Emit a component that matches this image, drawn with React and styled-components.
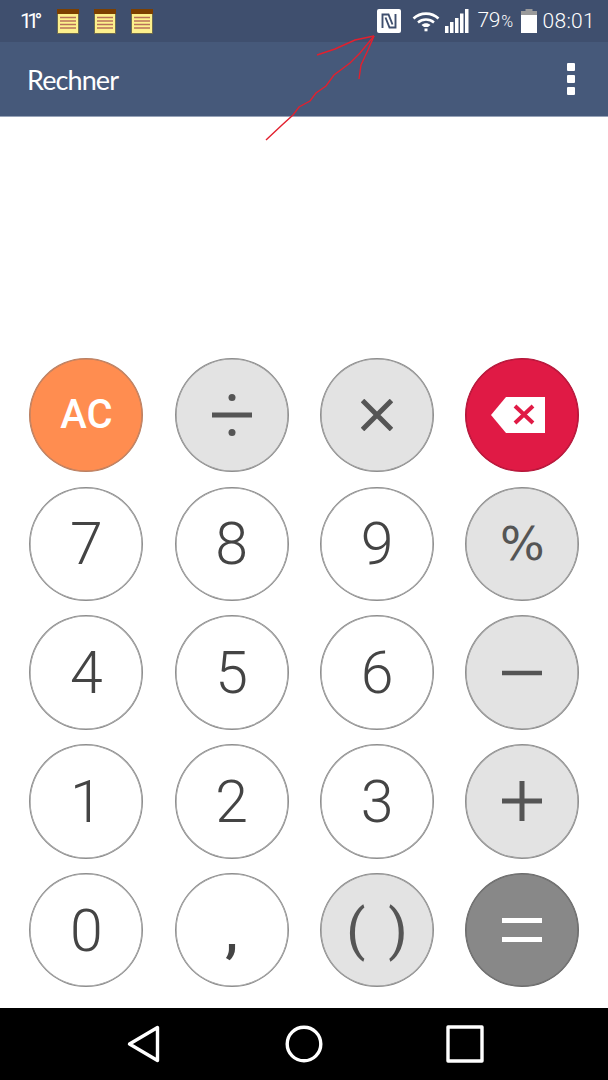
import styled, { createGlobalStyle } from "styled-components";

const GlobalStyle = createGlobalStyle`
  html, body { margin: 0; padding: 0; background: #fff; }
  * { box-sizing: border-box; }
`;

const Screen = styled.div`
  position: relative;
  width: 608px;
  height: 1080px;
  display: flex;
  flex-direction: column;
  overflow: hidden;
  font-family: Roboto, "Liberation Sans", sans-serif;
`;

const StatusBar = styled.div`
  height: 42px;
  background: #3f4f6e;
  display: flex;
  align-items: center;
  justify-content: space-between;
  color: #fff;
`;

const StatusLeft = styled.div`
  display: flex;
  align-items: center;
  padding-left: 20px;
`;

const StatusRight = styled.div`
  display: flex;
  align-items: center;
  padding-right: 13px;
`;

const Temp = styled.span`
  font-size: 21px;
  font-weight: 400;
  letter-spacing: -4.5px;
  width: 37px;
  line-height: 42px;
`;

const NoteIcon = styled.svg`
  width: 22px;
  height: 25px;
  margin-right: 15px;
`;

const StatusIcon = styled.svg`
  display: block;
  margin-right: ${(p) => p.$gap}px;
`;

const Battery = styled.span`
  font-size: 21px;
  font-weight: 300;
  width: 44px;
  line-height: 42px;
  letter-spacing: -0.3px;
`;

const BatterySign = styled.span`
  font-size: 16px;
  margin-left: 1px;
`;

const Clock = styled.span`
  font-size: 21px;
  font-weight: 300;
  line-height: 42px;
  letter-spacing: 0.3px;
`;

const AppBar = styled.div`
  height: 75px;
  background: #46597a;
  border-bottom: 1px solid #97a3b8;
  display: flex;
  align-items: center;
  justify-content: space-between;
  padding: 0 33px 0 27px;
`;

const Title = styled.div`
  font-family: Lato, sans-serif;
  font-weight: 400;
  font-size: 27px;
  letter-spacing: -0.9px;
  color: #fff;
`;

const Menu = styled.div`
  display: flex;
  flex-direction: column;
  gap: 4px;
`;

const MenuDot = styled.span`
  width: 8px;
  height: 8px;
  border-radius: 1px;
  background: #fff;
`;

const Display = styled.div`
  flex: 1;
  background: #fff;
`;

const Keypad = styled.div`
  display: grid;
  grid-template-columns: repeat(4, 114px);
  grid-auto-rows: 114.5px;
  justify-content: space-between;
  row-gap: 14.25px;
  padding: 0 28.6px 20.7px 29.4px;
  background: #fff;
`;

const keyColors = {
  digit: { bg: "#fff", border: "#8e8e8e", fg: "#444" },
  op: { bg: "#e3e3e3", border: "#8e8e8e", fg: "#555" },
  clear: { bg: "#ff8d50", border: "#b98064", fg: "#fff" },
  del: { bg: "#e01a45", border: "#b3173a", fg: "#fff" },
  equal: { bg: "#888", border: "#6c6c6c", fg: "#fff" },
};

const Key = styled.button`
  width: 114px;
  height: 114.5px;
  padding: 0;
  border-radius: 50%;
  border: 1px solid ${(p) => keyColors[p.$kind].border};
  box-shadow: inset 0 0 0 0.6px ${(p) => keyColors[p.$kind].border};
  background: ${(p) => keyColors[p.$kind].bg};
  color: ${(p) => keyColors[p.$kind].fg};
  display: flex;
  align-items: center;
  justify-content: center;
  font-family: ${(p) => p.$font || "Roboto"}, sans-serif;
  font-weight: ${(p) => p.$weight || 300};
  font-size: ${(p) => p.$size || 59}px;
  word-spacing: ${(p) => p.$spread || 0}px;
  line-height: 1;
`;

const BoldLabel = styled.span`
  font-weight: 500;
  font-size: 40px;
`;

const OpIcon = styled.svg`
  display: block;
  fill: none;
  stroke: #555;
  stroke-width: 4;
`;

const NavBar = styled.div`
  height: 72px;
  background: #000;
  display: grid;
  grid-template-columns: repeat(3, 161px);
  justify-content: center;
  align-items: center;
  justify-items: center;
`;

const NavIcon = styled.svg`
  display: block;
  fill: none;
  stroke: #fff;
  stroke-width: 3.4;
  stroke-linejoin: round;
`;

const Annotation = styled.svg`
  position: absolute;
  left: 0;
  top: 0;
  pointer-events: none;
  fill: none;
  stroke: #e2202e;
  stroke-width: 1.4;
`;

const Note = () => (
  <NoteIcon viewBox="0 0 22 25">
    <rect x="0.5" y="4" width="21" height="20.5" fill="#fdf08c" stroke="#6d6a50" strokeWidth="1" />
    <rect x="0" y="0" width="22" height="5" fill="#7c3f00" />
    <path d="M3 8.500h16M3 12h16M3 15.500h16M3 19h16" stroke="#b9705a" strokeWidth="1.3" />
  </NoteIcon>
);

const NfcIcon = () => (
  <StatusIcon $gap={11} width="24" height="24" viewBox="0 0 24 24">
    <rect width="24" height="24" rx="2" fill="#fff" />
    <path d="M5.500 19V5.500h6l4 10M18.500 5v13.500h-6l-4-10" fill="none" stroke="#3f4f6e" strokeWidth="1.900" />
  </StatusIcon>
);

const WifiIcon = () => (
  <StatusIcon $gap={5} width="28" height="22" viewBox="0 0 28 22">
    <path d="M1.500 8.500C8.500 2 19.500 2 26.500 8.500" fill="none" stroke="#fff" strokeWidth="2.600" />
    <path d="M6 12.500C10.500 8.500 17.500 8.500 22 12.500" fill="none" stroke="#fff" strokeWidth="2.400" />
    <path d="M9.500 15c2.500-2.200 6.500-2.200 9 0l-2.500 2h-4z" fill="#fff" />
    <rect x="12.500" y="18.500" width="3" height="2.800" fill="#fff" />
  </StatusIcon>
);

const SignalIcon = () => (
  <StatusIcon $gap={8} width="24" height="24" viewBox="0 0 24 24" fill="#fff">
    <rect x="0" y="17" width="3.500" height="7" />
    <rect x="5" y="13" width="3.500" height="11" />
    <rect x="10" y="9" width="3.500" height="15" />
    <rect x="15" y="4.500" width="3.500" height="19.500" />
    <rect x="20" y="0" width="3.500" height="24" />
  </StatusIcon>
);

const BatteryIcon = () => (
  <StatusIcon $gap={5} width="16" height="24" viewBox="0 0 16 24">
    <rect x="4.500" y="0" width="7" height="2" fill="#9a9a9a" />
    <rect x="0" y="2" width="16" height="4" fill="#9a9a9a" />
    <rect x="0" y="6" width="16" height="18" fill="#fff" />
  </StatusIcon>
);

const Divide = () => (
  <OpIcon width="42" height="44" viewBox="0 0 42 44">
    <path d="M1 22h40" strokeWidth="5" />
    <circle cx="21" cy="4.500" r="3.500" fill="#555" stroke="none" />
    <circle cx="21" cy="39.500" r="3.500" fill="#555" stroke="none" />
  </OpIcon>
);

const Times = () => (
  <OpIcon width="32" height="32" viewBox="0 0 32 32">
    <path d="M1.500 1.500l29 29M30.500 1.500l-29 29" strokeWidth="5" />
  </OpIcon>
);

const Minus = () => (
  <OpIcon width="40" height="6" viewBox="0 0 40 6">
    <path d="M0 3h40" strokeWidth="4.600" />
  </OpIcon>
);

const Plus = () => (
  <OpIcon width="40" height="40" viewBox="0 0 40 40">
    <path d="M0 20h40M20 0v40" strokeWidth="5" />
  </OpIcon>
);

const EqualsIcon = () => (
  <OpIcon width="40" height="24" viewBox="0 0 40 24">
    <path d="M0 2.500h40M0 21.500h40" stroke="#fff" strokeWidth="5" />
  </OpIcon>
);

const BackspaceIcon = styled.svg`
  display: block;
`;

const Backspace = () => (
  <BackspaceIcon width="62" height="36" viewBox="0 0 62 36">
    <path d="M15 0h39v36H15L0 18z" fill="#fff" />
    <path d="M24 9l18 17M42 9l-18 17" stroke="#e01a45" strokeWidth="4" fill="none" />
  </BackspaceIcon>
);

const keys = [
  { kind: "clear", label: <BoldLabel>AC</BoldLabel> },
  { kind: "op", label: <Divide /> },
  { kind: "op", label: <Times /> },
  { kind: "del", label: <Backspace /> },
  { kind: "digit", label: "7" },
  { kind: "digit", label: "8" },
  { kind: "digit", label: "9" },
  { kind: "op", label: "%", size: 47, font: "'DejaVu Sans'", weight: 400 },
  { kind: "digit", label: "4" },
  { kind: "digit", label: "5" },
  { kind: "digit", label: "6" },
  { kind: "op", label: <Minus /> },
  { kind: "digit", label: "1" },
  { kind: "digit", label: "2" },
  { kind: "digit", label: "3" },
  { kind: "op", label: <Plus /> },
  { kind: "digit", label: "0" },
  { kind: "digit", label: ",", weight: 500 },
  { kind: "op", label: "( )", size: 56, weight: 400, spread: 9 },
  { kind: "equal", label: <EqualsIcon /> },
];

const App = () => {
  return (
    <Screen>
      <GlobalStyle />
      <StatusBar>
        <StatusLeft>
          <Temp>11°</Temp>
          <Note />
          <Note />
          <Note />
        </StatusLeft>
        <StatusRight>
          <NfcIcon />
          <WifiIcon />
          <SignalIcon />
          <Battery>
            79<BatterySign>%</BatterySign>
          </Battery>
          <BatteryIcon />
          <Clock>08:01</Clock>
        </StatusRight>
      </StatusBar>
      <AppBar>
        <Title>Rechner</Title>
        <Menu>
          <MenuDot />
          <MenuDot />
          <MenuDot />
        </Menu>
      </AppBar>
      <Display />
      <Keypad>
        {keys.map((k, i) => (
          <Key key={i} $kind={k.kind} $size={k.size} $font={k.font} $weight={k.weight} $spread={k.spread}>
            {k.label}
          </Key>
        ))}
      </Keypad>
      <NavBar>
        <NavIcon width="33" height="38" viewBox="0 0 33 38">
          <path d="M30.500 2.500V35.500L2.500 19z" />
        </NavIcon>
        <NavIcon width="38" height="38" viewBox="0 0 38 38">
          <circle cx="19" cy="19" r="16.800" />
        </NavIcon>
        <NavIcon width="38" height="38" viewBox="0 0 38 38">
          <rect x="2" y="2" width="34" height="34" />
        </NavIcon>
      </NavBar>
      <Annotation width="608" height="160" viewBox="0 0 608 160">
        <path d="M266 140L282 125L293 115L299 107L310 101L316 93L326 86L334 75L350 63L360 53L374 36" />
        <path d="M317 55L335 49L355 40L374 36" />
        <path d="M359 79L361 65L368 50L374 36" />
      </Annotation>
    </Screen>
  );
};

export default App;
